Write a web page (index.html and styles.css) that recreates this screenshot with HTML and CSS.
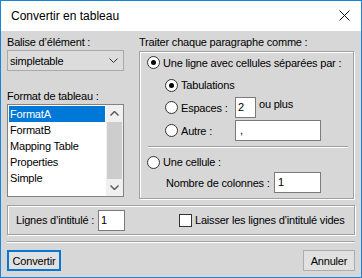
FILE: index.html
```html
<!DOCTYPE html>
<html lang="fr">
<head>
<meta charset="utf-8">
<title>Convertir en tableau</title>
<link rel="stylesheet" href="styles.css">
</head>
<body>
<div class="window">
  <div class="titlebar">
    <span class="title">Convertir en tableau</span>
    <svg class="close" width="11" height="11" viewBox="0 0 11 11"><path d="M0.5 0.5 L10.5 10.5 M10.5 0.5 L0.5 10.5" stroke="#111" stroke-width="1" fill="none"/></svg>
  </div>
  <div class="content">
    <div class="top">
      <div class="left">
        <div class="label">Balise d’élément :</div>
        <div class="select">
          <span class="select-text">simpletable</span>
          <svg class="chev" width="9" height="5" viewBox="0 0 9 5"><path d="M0.5 0.5 L4.5 4.5 L8.5 0.5" stroke="#333" stroke-width="1" fill="none"/></svg>
        </div>
        <div class="label label2">Format de tableau :</div>
        <div class="listbox">
          <div class="items">
            <div class="item sel">FormatA</div>
            <div class="item">FormatB</div>
            <div class="item">Mapping Table</div>
            <div class="item">Properties</div>
            <div class="item">Simple</div>
          </div>
          <div class="scrollbar">
            <div class="sb-btn"><svg width="9" height="5" viewBox="0 0 9 5"><path d="M0.5 4.5 L4.5 0.5 L8.5 4.5" stroke="#555" stroke-width="1.4" fill="none"/></svg></div>
            <div class="sb-thumb"></div>
            <div class="sb-btn"><svg width="9" height="5" viewBox="0 0 9 5"><path d="M0.5 0.5 L4.5 4.5 L8.5 0.5" stroke="#555" stroke-width="1.4" fill="none"/></svg></div>
          </div>
        </div>
      </div>
      <div class="right">
        <div class="label">Traiter chaque paragraphe comme :</div>
        <div class="group main">
          <div class="row r1">
            <span class="radio on"></span><span class="rtext">Une ligne avec cellules séparées par :</span>
          </div>
          <div class="row opt r-tab">
            <span class="radio on"></span><span class="rtext">Tabulations</span>
          </div>
          <div class="row opt r-field">
            <span class="optlabel"><span class="radio"></span><span class="rtext">Espaces :</span></span>
            <span class="field f-small">2</span>
            <span class="ouplus">ou plus</span>
          </div>
          <div class="row opt r-field">
            <span class="optlabel"><span class="radio"></span><span class="rtext">Autre :</span></span>
            <span class="field f-autre">,</span>
          </div>
          <div class="sep inner"></div>
          <div class="row r-cell">
            <span class="radio"></span><span class="rtext">Une cellule :</span>
          </div>
          <div class="row r-cols">
            <span class="colslabel">Nombre de colonnes :</span>
            <span class="field f-cols">1</span>
          </div>
        </div>
      </div>
    </div>
    <div class="group lower">
      <span class="lignes">Lignes d’intitulé :</span>
      <span class="field f-lignes">1</span>
      <span class="checkbox"></span>
      <span class="ctext">Laisser les lignes d’intitulé vides</span>
    </div>
    <div class="sep outer"></div>
    <div class="buttons">
      <div class="btn default">Convertir</div>
      <div class="btn cancel">Annuler</div>
    </div>
  </div>
</div>
</body>
</html>
```
FILE: styles.css
```css
* { box-sizing: border-box; }
html, body { margin: 0; padding: 0; }
body {
  font-family: "Liberation Sans", Arial, sans-serif;
  font-size: 11px;
  letter-spacing: -0.2px;
  color: #000;
  background: #fff;
}
.window {
  width: 362px;
  height: 278px;
  border: 1px solid #1883d7;
  background: #d7d7d7;
  display: flex;
  flex-direction: column;
}
.titlebar {
  height: 30px;
  flex: none;
  background: #fff;
  display: flex;
  align-items: center;
  padding: 0 11px 1px 10px;
}
.title { flex: 1; font-size: 12px; letter-spacing: 0; }
.close { display: block; }
.content {
  flex: 1;
  padding: 4px 6px 0 6px;
  display: flex;
  flex-direction: column;
}
.top { display: flex; gap: 15px; }
.left { width: 117px; display: flex; flex-direction: column; }
.right { width: 215px; display: flex; flex-direction: column; }
.label { height: 14px; line-height: 14px; white-space: nowrap; }
.label2 { margin-top: 18px; }
.select {
  margin-top: 1px;
  height: 21px;
  border: 1px solid #a9a9a9;
  background: #dcdcdc;
  display: flex;
  align-items: center;
  padding: 0 5px 0 2px;
}
.select-text { flex: 1; }
.chev { display: block; }
.listbox {
  margin-top: 1px;
  height: 93px;
  border: 1px solid #828282;
  background: #fff;
  display: flex;
}
.items { flex: 1; padding: 1px; }
.item { height: 16px; line-height: 16px; padding-left: 1px; white-space: nowrap; }
.item.sel { background: #0078d7; color: #fff; }
.scrollbar { width: 17px; display: flex; flex-direction: column; background: #f0f0f0; }
.sb-btn { height: 17px; display: flex; align-items: center; justify-content: center; }
.sb-btn svg { display: block; }
.sb-thumb { flex: 1; background: #cdcdcd; margin: 0 1px; }

.group {
  border: 1px solid #a0a0a0;
  box-shadow: inset 1px 1px 0 #fff, 1px 1px 0 #fff;
}
.group.main {
  margin-top: 2px;
  height: 148px;
  padding: 0 5px 0 7px;
  display: flex;
  flex-direction: column;
}
.row { display: flex; align-items: center; white-space: nowrap; }
.r1 { height: 21px; }
.opt { margin-top: 2px; padding-left: 18px; }
.r-tab { height: 20px; }
.r-field { height: 21px; }
.radio {
  width: 13px;
  height: 13px;
  flex: none;
  border-radius: 50%;
  border: 1px solid #333;
  background: #fff;
  position: relative;
}
.radio.on::after {
  content: "";
  position: absolute;
  left: 3px;
  top: 3px;
  width: 5px;
  height: 5px;
  border-radius: 50%;
  background: #000;
}
.rtext { margin-left: 3px; }
.optlabel { width: 70px; display: flex; align-items: center; }
.field {
  height: 21px;
  border: 1px solid #7a7a7a;
  background: #fff;
  padding-left: 2px;
  line-height: 19px;
  flex: none;
}
.f-small { width: 21px; }
.f-autre { width: 86px; padding-left: 4px; }
.ouplus { margin-left: 3px; align-self: flex-start; line-height: 14px; }
.sep { height: 2px; border-top: 1px solid #a0a0a0; border-bottom: 1px solid #fff; }
.sep.inner { margin: 5px 0 0 1px; }
.r-cell { margin-top: 4px; height: 20px; }
.r-cols { height: 21px; padding-left: 19px; }
.colslabel { width: 108px; }
.f-cols { width: 47px; padding-left: 3px; }

.group.lower {
  margin-top: 6px;
  height: 30px;
  display: flex;
  align-items: center;
  padding-left: 8px;
  white-space: nowrap;
}
.lignes { width: 82px; }
.f-lignes { width: 27px; }
.checkbox {
  width: 13px;
  height: 13px;
  margin-left: 54px;
  border: 1px solid #333;
  background: #fff;
  flex: none;
}
.ctext { margin-left: 3px; }
.sep.outer { margin-top: 6px; }
.buttons { margin-top: 7px; display: flex; justify-content: space-between; }
.btn {
  height: 21px;
  border: 1px solid #adadad;
  background: #e1e1e1;
  display: flex;
  align-items: center;
  justify-content: center;
}
.btn.default { width: 54px; border: 2px solid #0078d7; }
.btn.cancel { width: 52px; }
```
